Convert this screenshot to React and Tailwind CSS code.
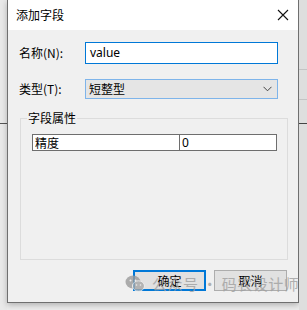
import React from 'react';

const cjk = { fontFamily: '"Microsoft YaHei UI", "Noto Sans CJK SC", "Noto Sans", sans-serif' };

function WeChatMark() {
  return (
    <svg width="20" height="17" viewBox="0 0 20 17" className="shrink-0">
      <ellipse cx="8" cy="7" rx="7.5" ry="6.5" fill="#9a9a9a" />
      <circle cx="5.5" cy="5.5" r="1" fill="#f0f0f0" />
      <circle cx="10.5" cy="5.5" r="1" fill="#f0f0f0" />
      <ellipse cx="13.5" cy="11" rx="6" ry="5.2" fill="#a8a8a8" stroke="#f0f0f0" strokeWidth="1" />
      <circle cx="11.5" cy="10" r="0.8" fill="#f0f0f0" />
      <circle cx="15.5" cy="10" r="0.8" fill="#f0f0f0" />
    </svg>
  );
}

export default function App() {
  return (
    <div className="relative flex w-[307px] h-[310px] overflow-hidden bg-[#ececec] text-[12px] text-black" style={cjk}>
      {/* left backdrop */}
      <div className="w-[7px] h-full flex flex-col bg-[#e9e9e9]">
        <div className="h-[123px]" />
        <div className="h-px bg-[#555]" />
      </div>

      {/* dialog window */}
      <div className="w-[292px] h-[303px] flex flex-col border-x border-b border-[#6f6f6f] bg-[#f0f0f0] shadow-[0_2px_6px_rgba(0,0,0,0.25)]">
        {/* title bar */}
        <div className="h-[30px] shrink-0 bg-white flex items-center justify-between pl-[8px] pr-[8px]">
          <span className="text-[12px] leading-none">添加字段</span>
          <svg width="12" height="12" viewBox="0 0 12 12" className="mr-[1px]">
            <path d="M1 1 L11 11 M11 1 L1 11" stroke="#111" strokeWidth="1.1" />
          </svg>
        </div>

        {/* body */}
        <div className="flex-1 flex flex-col pl-[11px] pr-[20px]">
          <div className="mt-[12px] flex items-center h-[22px]">
            <span className="w-[66px] leading-none">名称(N):</span>
            <div className="flex-1 h-[22px] bg-white border border-[#0078d7] flex items-center pl-[4px]">
              <span style={{ fontFamily: '"Segoe UI", "Noto Sans", sans-serif' }} className="text-[12px] leading-none">value</span>
            </div>
          </div>

          <div className="mt-[15px] flex items-center h-[20px]">
            <span className="w-[66px] leading-none">类型(T):</span>
            <div className="flex-1 h-[20px] bg-[#e5e5e5] border border-[#7eb4ea] flex items-center justify-between pl-[3px] pr-[5px]">
              <span className="text-[12px] leading-none">短整型</span>
              <svg width="9" height="6" viewBox="0 0 9 6">
                <path d="M0.5 0.8 L4.5 4.8 L8.5 0.8" stroke="#444" strokeWidth="1" fill="none" />
              </svg>
            </div>
          </div>

          {/* group box */}
          <div className="relative mt-[19px] ml-[1px] mr-[-10px] h-[142px] border border-[#dcdcdc]">
            <span className="absolute left-[6px] top-[-9px] px-[1px] bg-[#f0f0f0] text-[12px] leading-[16px]">字段属性</span>
            <div className="mt-[15px] ml-[11px] mr-[10px] h-[17px] flex border border-[#6e6e6e] bg-white">
              <div className="w-[147px] border-r border-[#6e6e6e] flex items-center pl-[2px] leading-none">精度</div>
              <div className="flex-1 flex items-center pl-[2px] leading-none" style={{ fontFamily: '"Segoe UI", "Noto Sans", sans-serif' }}>0</div>
            </div>
          </div>

          {/* buttons */}
          <div className="mt-[10px] flex justify-end gap-[8px] mr-[-9px]">
            <button className="w-[73px] h-[21px] bg-[#e1e1e1] border-2 border-[#0078d7] text-[12px] leading-none flex items-center justify-center">确定</button>
            <button className="w-[73px] h-[21px] bg-[#e1e1e1] border border-[#adadad] text-[12px] leading-none flex items-center justify-center">取消</button>
          </div>
        </div>
      </div>

      {/* right backdrop */}
      <div className="flex-1 h-full flex flex-col bg-[#dedede]">
        <div className="h-[69px]" />
        <div className="h-px bg-[#c4c4c4]" />
        <div className="h-[29px]" />
        <div className="h-px bg-[#c4c4c4]" />
        <div className="h-[23px]" />
        <div className="h-px bg-[#444]" />
      </div>

      {/* watermark */}
      <div className="absolute left-[125px] top-[275px] flex items-center gap-[7px] opacity-80 pointer-events-none">
        <WeChatMark />
        <span className="text-[15px] leading-none text-[#a0a0a0] tracking-[0.5px]">公众号 · 码农设计师</span>
      </div>
    </div>
  );
}
